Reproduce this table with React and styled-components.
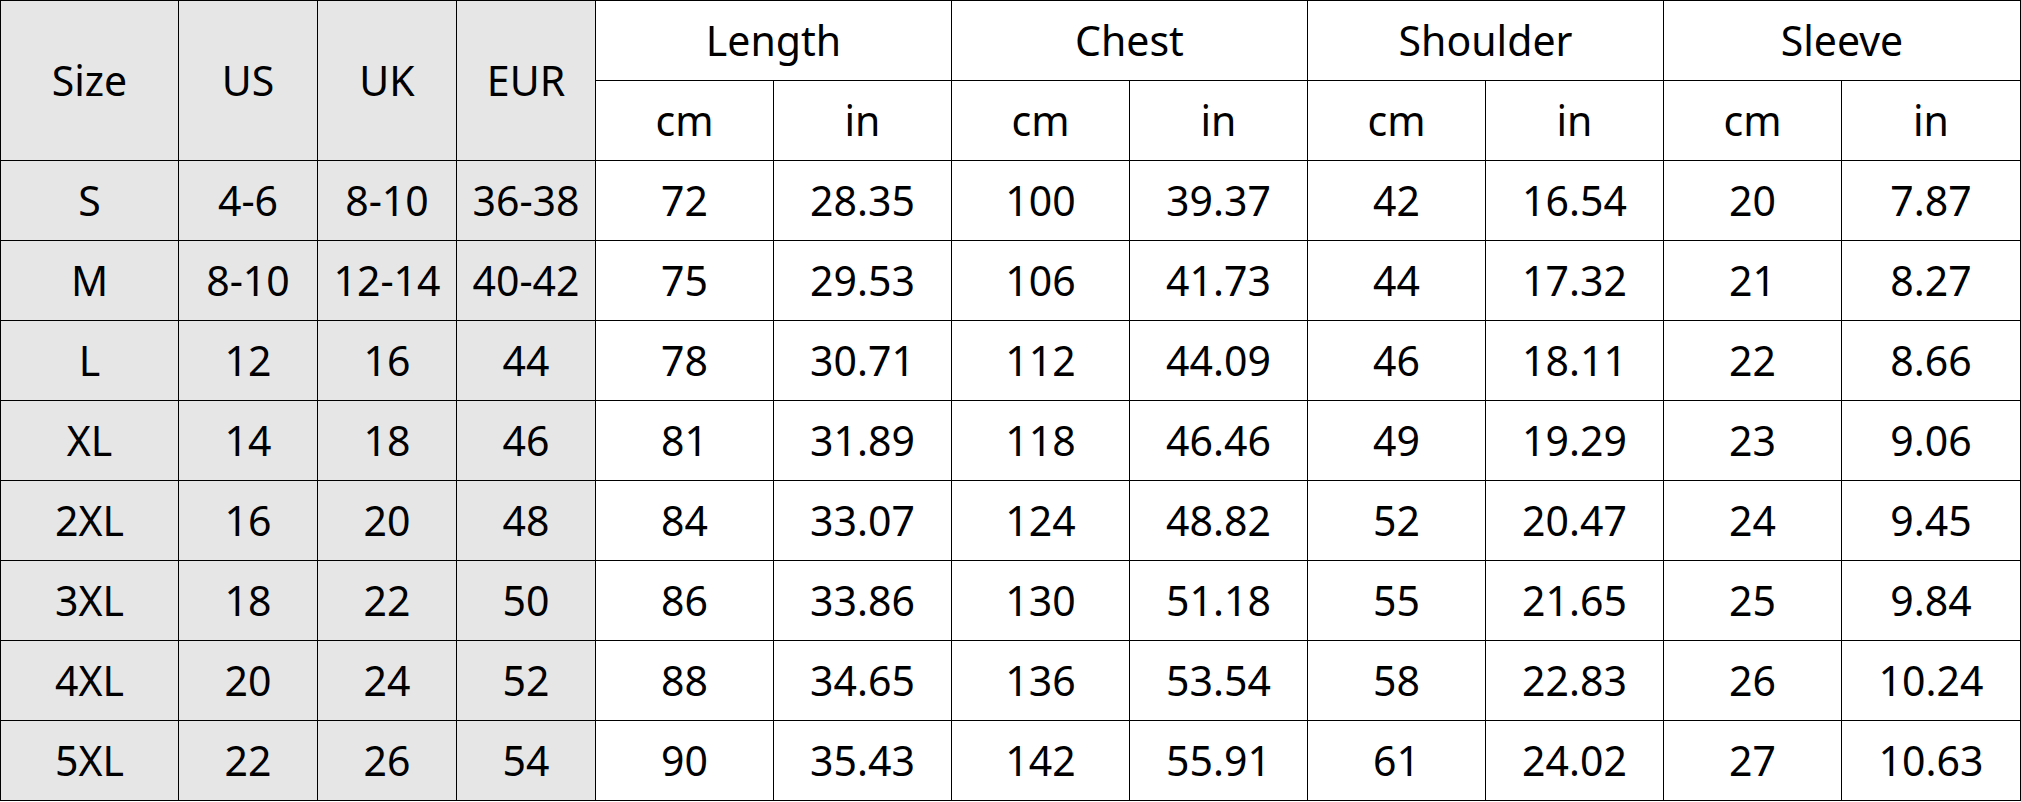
import React from 'react';
import styled, { createGlobalStyle } from 'styled-components';

const GlobalStyle = createGlobalStyle`
  html, body {
    margin: 0;
    padding: 0;
    background: #ffffff;
  }
`;

const Table = styled.table`
  border-collapse: collapse;
  table-layout: fixed;
  width: 2020px;
  font-family: "Noto Sans", "Open Sans", sans-serif;
  font-size: 41px;
  color: #000;
`;

const Col = styled.col`
  width: ${(p) => p.$w}px;
`;

const Cell = styled.td`
  height: 79px;
  padding: 0;
  border: 1.5px solid #000;
  text-align: center;
  vertical-align: middle;
  background: ${(p) => (p.$shaded ? '#e6e6e6' : '#ffffff')};
  line-height: 1;
  white-space: nowrap;
`;

const HeadCell = styled(Cell).attrs({ as: 'th' })`
  font-weight: 400;
`;

const groups = ['Length', 'Chest', 'Shoulder', 'Sleeve'];

const rows = [
  ['S', '4-6', '8-10', '36-38', '72', '28.35', '100', '39.37', '42', '16.54', '20', '7.87'],
  ['M', '8-10', '12-14', '40-42', '75', '29.53', '106', '41.73', '44', '17.32', '21', '8.27'],
  ['L', '12', '16', '44', '78', '30.71', '112', '44.09', '46', '18.11', '22', '8.66'],
  ['XL', '14', '18', '46', '81', '31.89', '118', '46.46', '49', '19.29', '23', '9.06'],
  ['2XL', '16', '20', '48', '84', '33.07', '124', '48.82', '52', '20.47', '24', '9.45'],
  ['3XL', '18', '22', '50', '86', '33.86', '130', '51.18', '55', '21.65', '25', '9.84'],
  ['4XL', '20', '24', '52', '88', '34.65', '136', '53.54', '58', '22.83', '26', '10.24'],
  ['5XL', '22', '26', '54', '90', '35.43', '142', '55.91', '61', '24.02', '27', '10.63'],
];

const widths = [178, 139, 139, 139, 178, 178, 178, 178, 178, 178, 178, 179];

const App = () => (
  <>
    <GlobalStyle />
    <Table>
      <colgroup>
        {widths.map((w, i) => (
          <Col key={i} $w={w} />
        ))}
      </colgroup>
      <thead>
        <tr>
          {['Size', 'US', 'UK', 'EUR'].map((h) => (
            <HeadCell key={h} rowSpan={2} $shaded>
              {h}
            </HeadCell>
          ))}
          {groups.map((g) => (
            <HeadCell key={g} colSpan={2}>
              {g}
            </HeadCell>
          ))}
        </tr>
        <tr>
          {groups.map((g) => (
            <React.Fragment key={g}>
              <HeadCell>cm</HeadCell>
              <HeadCell>in</HeadCell>
            </React.Fragment>
          ))}
        </tr>
      </thead>
      <tbody>
        {rows.map((r) => (
          <tr key={r[0]}>
            {r.map((v, i) => (
              <Cell key={i} $shaded={i < 4}>
                {v}
              </Cell>
            ))}
          </tr>
        ))}
      </tbody>
    </Table>
  </>
);

export default App;
